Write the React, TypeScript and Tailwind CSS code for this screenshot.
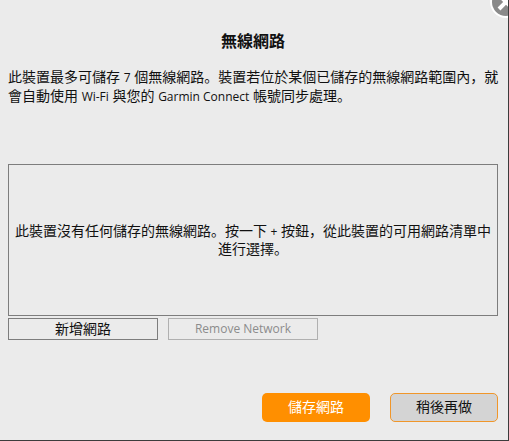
const font = "font-['Open_Sans','Noto_Sans_CJK_JP',sans-serif]";

export default function App() {
  return (
    <div className={`relative flex h-[441px] w-[509px] flex-col overflow-hidden border-r border-b border-[#3c3c3c] bg-[#ebebeb] text-sm leading-[19px] text-[#111] ${font}`}>
      {/* close button sits over the dialog corner */}
      <svg className="absolute top-0 -right-[1px]" width="24" height="22" viewBox="0 0 24 22">
        <circle cx="21" cy="2" r="16" fill="#fff" />
        <circle cx="21" cy="2" r="14" fill="#8a8a8a" />
        <path d="M14 -5 L28 9 M28 -5 L14 9" stroke="#fff" strokeWidth="4" />
      </svg>

      <h1 className="mt-[31px] pr-[2px] text-center text-base leading-5 font-bold">無線網路</h1>

      <p className="mt-[16px] px-2">
        此裝置最多可儲存 <span className="text-xs">7</span> 個無線網路。裝置若位於某個已儲存的無線網路範圍內，就會自動使用 <span className="text-xs">Wi-Fi</span> 與您的 <span className="text-xs">Garmin Connect</span> 帳號同步處理。
      </p>

      <div className="mx-2 mt-[59px] flex h-[152px] w-[490px] items-center justify-center border border-[#7d7d7d] px-1 text-center leading-[18px]">
        <p>
          此裝置沒有任何儲存的無線網路。按一下 <span className="text-xs">+</span> 按鈕，從此裝置的可用網路清單中進行選擇。
        </p>
      </div>

      <div className="mx-2 mt-[2px] flex gap-[10px]">
        <button className="h-[22px] w-[150px] border border-[#7d7d7d] pb-[3px]">新增網路</button>
        <button className="h-[22px] w-[150px] border border-[#b0b0b0] pb-[1px] text-xs text-[#8c8c8c]">Remove Network</button>
      </div>

      <div className="mt-[53px] flex justify-end gap-[20px] pr-[10px]">
        <button className="h-[29px] w-[108px] rounded-[5px] bg-[#ff8f00] pb-[2px] text-white">儲存網路</button>
        <button className="h-[29px] w-[108px] rounded-[5px] border border-[#f0962a] bg-[#d4d4d4] pb-[2px]">稍後再做</button>
      </div>
    </div>
  );
}
